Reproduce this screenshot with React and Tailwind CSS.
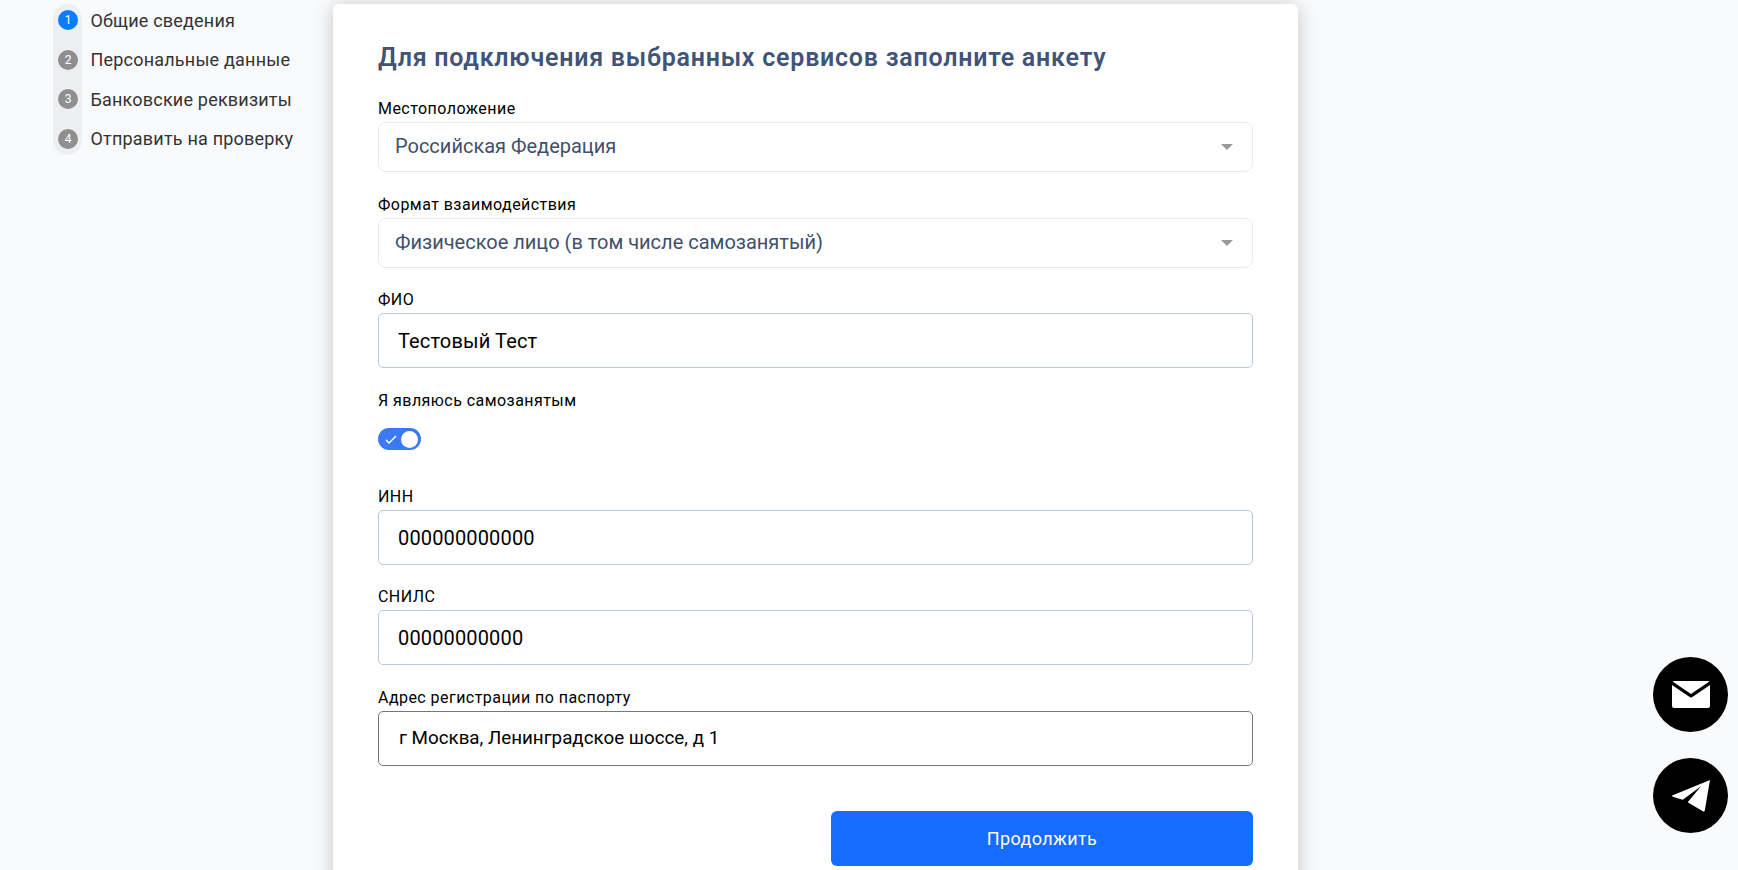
import React from 'react';

const STEPS = ['Общие сведения', 'Персональные данные', 'Банковские реквизиты', 'Отправить на проверку'];

const LABEL = 'text-[16px] leading-5 tracking-[0.45px] text-black mb-1 pt-px h-5';

const SelectField = ({ label, value }) => (
    <div>
        <div className={LABEL}>{label}</div>
        <div className="flex items-center justify-between h-[50px] border border-[#e9e9e9] rounded-lg pl-4 pr-[19px] text-[20px] text-[#3f506b]">
            <span className="pb-[2px]">{value}</span>
            <svg width="12" height="6" viewBox="0 0 12 6"><path d="M0 0h12L6 6z" fill="#999" /></svg>
        </div>
    </div>
);

const InputField = ({ label, value, boxClass }) => (
    <div>
        <div className={LABEL}>{label}</div>
        <div className={`flex items-center h-[55px] border rounded-[5px] text-black ${boxClass}`}>{value}</div>
    </div>
);

const App = () => {
    return (
        <div className="relative flex h-[870px] overflow-hidden bg-[#f9fafc] font-['Roboto',sans-serif]">
            {/* Шаги анкеты */}
            <div className="w-[333px] shrink-0 pl-[53px] pt-1">
                <div className="flex flex-col gap-[19.5px] w-[29px] py-[6px] px-[5px] bg-[#eeeff2] rounded-full">
                    {STEPS.map((step, i) => (
                        <div key={step} className="flex items-center gap-[12.5px] h-5 whitespace-nowrap">
                            <span className={`flex items-center justify-center shrink-0 w-5 h-5 rounded-full text-[12px] text-white ${i === 0 ? 'bg-[#0a7cff]' : 'bg-[#8f8f8f]'}`}>{i + 1}</span>
                            <span className="text-[18px] tracking-[0.2px] text-[#333]">{step}</span>
                        </div>
                    ))}
                </div>
            </div>

            {/* Карточка с формой */}
            <div className="w-[965px] h-[900px] mt-1 px-[45px] pt-[40px] bg-white rounded-md shadow-[0_2px_20px_rgba(0,0,0,0.22)]">
                <h1 className="text-[25px] leading-7 font-semibold tracking-[0.77px] text-[#3f5478] mb-[26px] whitespace-nowrap">Для подключения выбранных сервисов заполните анкету</h1>
                <SelectField label="Местоположение" value="Российская Федерация" />
                <div className="mt-[22px]">
                    <SelectField label="Формат взаимодействия" value="Физическое лицо (в том числе самозанятый)" />
                </div>
                <div className="mt-[21px]">
                    <InputField label="ФИО" value="Тестовый Тест" boxClass="border-[#bcc8d6] pl-[19px] text-[20px] tracking-[0.15px]" />
                </div>
                <div className="mt-[22px] pt-px h-5 text-[16px] leading-5 tracking-[0.45px] text-black">Я являюсь самозанятым</div>
                <div className="flex items-center justify-end w-[43px] h-[22px] mt-[18px] pr-[3px] bg-[#3b7af0] rounded-full relative">
                    <svg className="absolute left-[7px] top-[7px]" width="12" height="9" viewBox="0 0 12 9" fill="none"><path d="M1 5l3 3 7-7" stroke="#fff" strokeWidth="1.5" /></svg>
                    <span className="w-[17px] h-[17px] rounded-full bg-white"></span>
                </div>
                <div className="mt-[36px]">
                    <InputField label="ИНН" value="000000000000" boxClass="border-[#bcc8d6] pl-[19px] text-[20px] tracking-[0.15px]" />
                </div>
                <div className="mt-[21px]">
                    <InputField label="СНИЛС" value="00000000000" boxClass="border-[#bcc8d6] pl-[19px] text-[20px] tracking-[0.15px]" />
                </div>
                <div className="mt-[22px]">
                    <InputField label="Адрес регистрации по паспорту" value="г Москва, Ленинградское шоссе, д 1" boxClass="border-[#777] pl-5 text-[18.8px]" />
                </div>
                <div className="flex justify-end mt-[45px]">
                    <button className="w-[422px] h-[55px] bg-[#166cff] rounded-md text-white text-[18px] tracking-[0.4px]">Продолжить</button>
                </div>
            </div>

            {/* Плавающие кнопки связи */}
            <div className="absolute right-[10px] top-[657px] flex flex-col gap-[26px]">
                <div className="flex items-center justify-center w-[75px] h-[75px] bg-black rounded-full">
                    <svg width="38" height="27" viewBox="0 0 38 27"><path d="M2 0h34a2 2 0 0 1 1.400.6L19 13 .6.6A2 2 0 0 1 2 0zM0 4l18 12.200a2 2 0 0 0 2 0L38 4v21a2 2 0 0 1-2 2H2a2 2 0 0 1-2-2z" fill="#fff" /></svg>
                </div>
                <div className="flex items-center justify-center w-[75px] h-[75px] bg-black rounded-full">
                    <svg width="38" height="32" viewBox="0 0 38 32"><path d="M38 0 32.800 30.500c-.2.9-.8 1.300-1.600.9L15.700 22.300 29 6.300 10.700 19.700.8 16.700c-1-.3-1-1 0-1.400z" fill="#fff" /></svg>
                </div>
            </div>
        </div>
    );
};

export default App;
